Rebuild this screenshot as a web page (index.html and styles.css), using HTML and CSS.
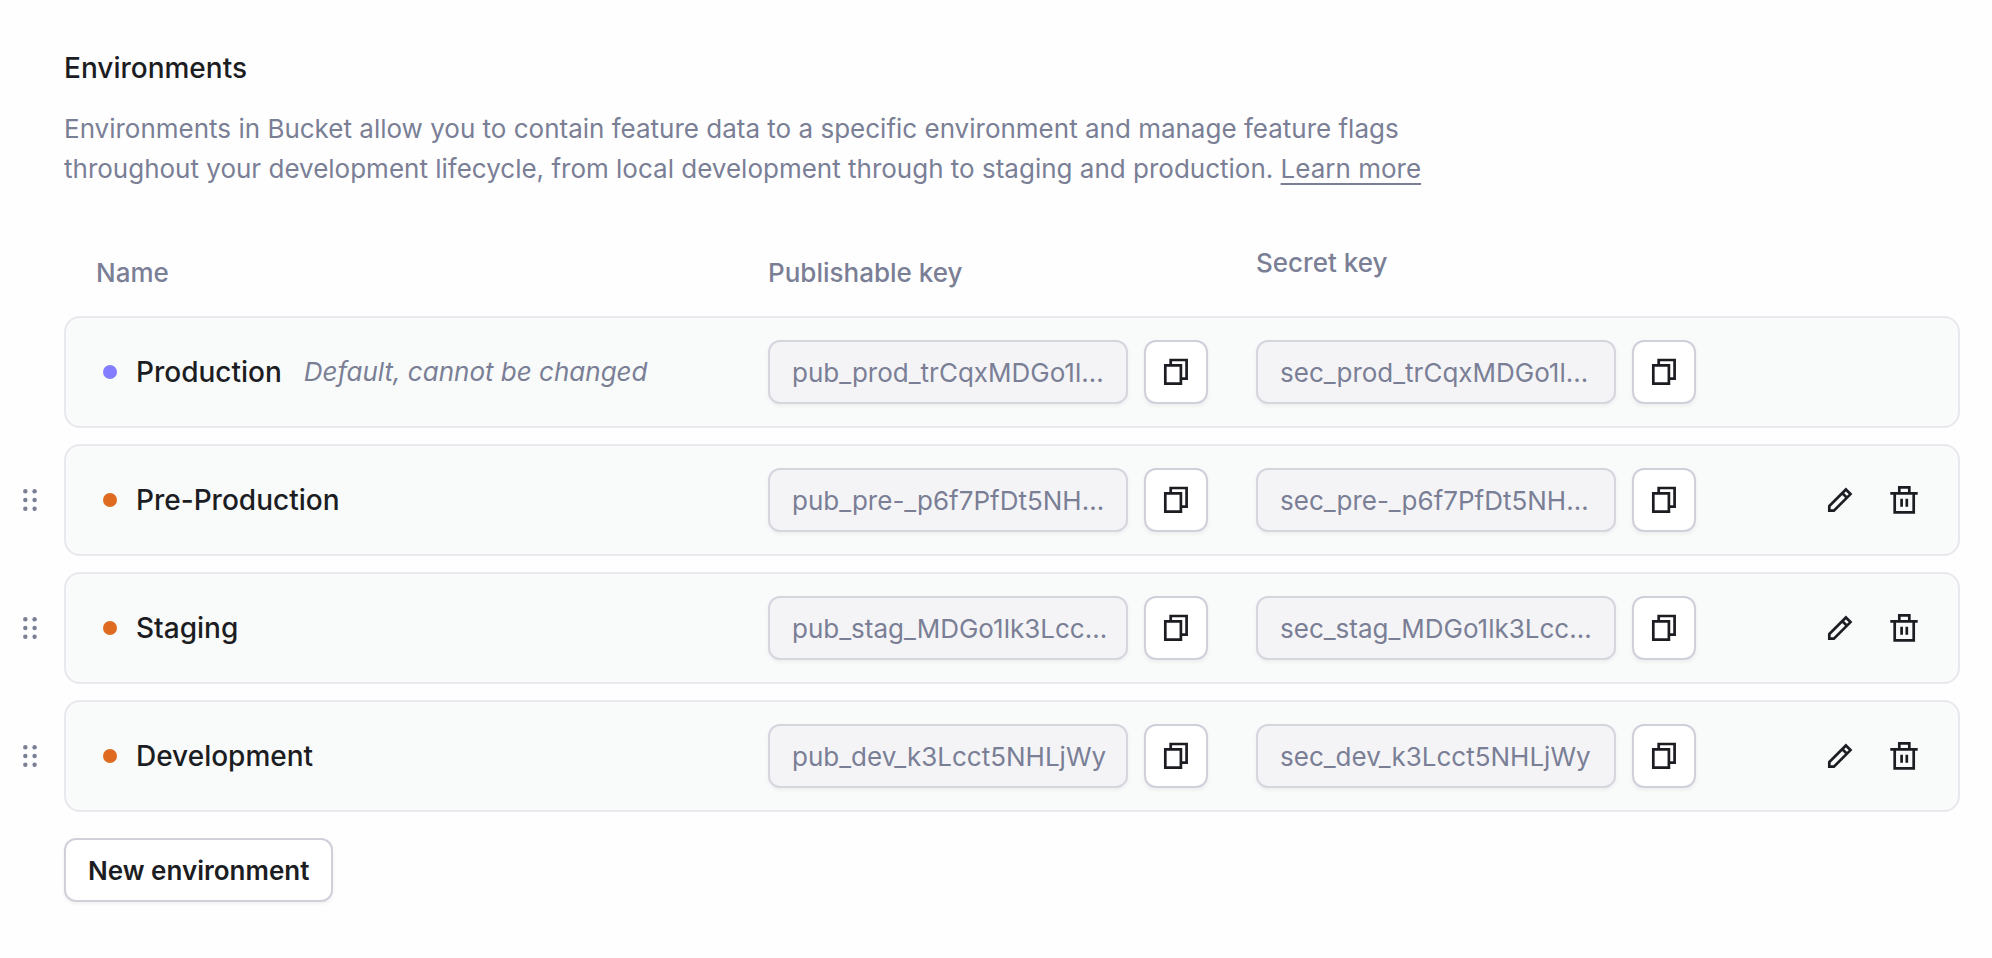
FILE: index.html
```html
<!DOCTYPE html>
<html lang="en">
<head>
<meta charset="utf-8">
<title>Environments</title>
<meta name="viewport" content="width=device-width, initial-scale=1">
<link rel="stylesheet" href="styles.css">
</head>
<body>
<svg class="sprite" aria-hidden="true">
  <symbol id="copy" viewBox="0 0 32 32"><path d="M5.3 9.4h15.6v18.3H5.3zM10.7 9.4V4h15.9v18.7H21"/></symbol>
  <symbol id="edit" viewBox="0 0 32 32"><path d="M5.3 26.7v-4.6L21.9 5.5l4.6 4.6L9.9 26.7zM18.3 9.1l4.6 4.6"/></symbol>
  <symbol id="trash" viewBox="0 0 32 32"><path d="M2.3 9.3h27.4M6.7 9.3v19h19V9.3M11.3 9.3V3.4h10v5.9M13.6 14.7v8M18.8 14.7v8"/></symbol>
  <symbol id="grip" viewBox="0 0 28 28"><circle cx="9.3" cy="5.3" r="2.2"/><circle cx="18.6" cy="5.3" r="2.2"/><circle cx="9.3" cy="14" r="2.2"/><circle cx="18.6" cy="14" r="2.2"/><circle cx="9.3" cy="22.7" r="2.2"/><circle cx="18.6" cy="22.7" r="2.2"/></symbol>
</svg>
<main class="page">
  <header class="intro">
    <h1 class="title">Environments</h1>
    <p class="description">Environments in Bucket allow you to contain feature data to a specific environment and manage feature flags throughout your development lifecycle, from local development through to staging and production. <a class="link" href="#">Learn more</a></p>
  </header>
  <table class="environments">
    <colgroup><col class="col-grip"><col><col class="col-key"><col class="col-key"><col class="col-actions"></colgroup>
    <thead>
      <tr>
        <td></td>
        <th class="head-name" scope="col">Name</th>
        <th scope="col">Publishable key</th>
        <th class="head-secret" scope="col">Secret key</th>
        <td></td>
      </tr>
    </thead>
    <tbody>
      <tr>
        <td class="grip-cell"></td>
        <td class="cell cell-first"><div class="name"><span class="dot dot-default"></span><span>Production</span><em class="note">Default, cannot be changed</em></div></td>
        <td class="cell"><div class="key"><input class="key-input" aria-label="Production publishable key" value="pub_prod_trCqxMDGo1l…" readonly><button class="copy" type="button" aria-label="Copy publishable key"><svg class="icon"><use href="#copy"/></svg></button></div></td>
        <td class="cell"><div class="key"><input class="key-input" aria-label="Production secret key" value="sec_prod_trCqxMDGo1l…" readonly><button class="copy" type="button" aria-label="Copy secret key"><svg class="icon"><use href="#copy"/></svg></button></div></td>
        <td class="cell cell-last"></td>
      </tr>
      <tr>
        <td class="grip-cell"><button class="grip" type="button" aria-label="Reorder Pre-Production"><svg class="grip-icon"><use href="#grip"/></svg></button></td>
        <td class="cell cell-first"><div class="name"><span class="dot"></span><span>Pre-Production</span></div></td>
        <td class="cell"><div class="key"><input class="key-input" aria-label="Pre-Production publishable key" value="pub_pre-_p6f7PfDt5NH…" readonly><button class="copy" type="button" aria-label="Copy publishable key"><svg class="icon"><use href="#copy"/></svg></button></div></td>
        <td class="cell"><div class="key"><input class="key-input" aria-label="Pre-Production secret key" value="sec_pre-_p6f7PfDt5NH…" readonly><button class="copy" type="button" aria-label="Copy secret key"><svg class="icon"><use href="#copy"/></svg></button></div></td>
        <td class="cell cell-last"><div class="actions"><button class="action" type="button" aria-label="Edit Pre-Production"><svg class="icon"><use href="#edit"/></svg></button><button class="action" type="button" aria-label="Delete Pre-Production"><svg class="icon"><use href="#trash"/></svg></button></div></td>
      </tr>
      <tr>
        <td class="grip-cell"><button class="grip" type="button" aria-label="Reorder Staging"><svg class="grip-icon"><use href="#grip"/></svg></button></td>
        <td class="cell cell-first"><div class="name"><span class="dot"></span><span>Staging</span></div></td>
        <td class="cell"><div class="key"><input class="key-input" aria-label="Staging publishable key" value="pub_stag_MDGo1lk3Lcc…" readonly><button class="copy" type="button" aria-label="Copy publishable key"><svg class="icon"><use href="#copy"/></svg></button></div></td>
        <td class="cell"><div class="key"><input class="key-input" aria-label="Staging secret key" value="sec_stag_MDGo1lk3Lcc…" readonly><button class="copy" type="button" aria-label="Copy secret key"><svg class="icon"><use href="#copy"/></svg></button></div></td>
        <td class="cell cell-last"><div class="actions"><button class="action" type="button" aria-label="Edit Staging"><svg class="icon"><use href="#edit"/></svg></button><button class="action" type="button" aria-label="Delete Staging"><svg class="icon"><use href="#trash"/></svg></button></div></td>
      </tr>
      <tr>
        <td class="grip-cell"><button class="grip" type="button" aria-label="Reorder Development"><svg class="grip-icon"><use href="#grip"/></svg></button></td>
        <td class="cell cell-first"><div class="name"><span class="dot"></span><span>Development</span></div></td>
        <td class="cell"><div class="key"><input class="key-input" aria-label="Development publishable key" value="pub_dev_k3Lcct5NHLjWy" readonly><button class="copy" type="button" aria-label="Copy publishable key"><svg class="icon"><use href="#copy"/></svg></button></div></td>
        <td class="cell"><div class="key"><input class="key-input" aria-label="Development secret key" value="sec_dev_k3Lcct5NHLjWy" readonly><button class="copy" type="button" aria-label="Copy secret key"><svg class="icon"><use href="#copy"/></svg></button></div></td>
        <td class="cell cell-last"><div class="actions"><button class="action" type="button" aria-label="Edit Development"><svg class="icon"><use href="#edit"/></svg></button><button class="action" type="button" aria-label="Delete Development"><svg class="icon"><use href="#trash"/></svg></button></div></td>
      </tr>
    </tbody>
  </table>
  <button class="new-button" type="button">New environment</button>
</main>
</body>
</html>
```
FILE: styles.css
```css
* { box-sizing: border-box; }

body {
  margin: 0;
  background: #fefefe;
  color: #1c1d22;
  font-family: Inter, sans-serif;
  font-size: 26px;
  line-height: 40px;
}

button, input { font: inherit; color: inherit; }

.sprite { position: absolute; width: 0; height: 0; }

.page { padding: 48px 32px 48px 0; }

.intro { padding-left: 64px; }

.title { margin: 0 0 21px; font-size: 28px; font-weight: 500; }

.description { max-width: 1400px; margin: 0; color: #7a7f96; }

.link {
  color: inherit;
  text-decoration: underline 2px;
  text-underline-offset: 5px;
  text-decoration-skip-ink: none;
}

.environments {
  width: 100%;
  margin-top: 40px;
  table-layout: fixed;
  border-collapse: separate;
  border-spacing: 0 16px;
}

.col-grip { width: 64px; }
.col-key { width: 488px; }
.col-actions { width: 216px; }

.environments td { padding: 0; }

.environments th {
  height: 55px;
  padding: 0;
  color: #7a7f96;
  font-weight: 500;
  line-height: 36px;
  text-align: left;
  vertical-align: middle;
}

.environments .head-name { padding-left: 32px; }
.environments .head-secret { vertical-align: top; }

.environments .cell {
  height: 112px;
  border: solid #e8e8ed;
  border-width: 2px 0;
  background: #f9fafa;
}

.environments .cell-first { padding-left: 30px; border-left-width: 2px; border-radius: 16px 0 0 16px; }
.environments .cell-last { padding-right: 22px; border-right-width: 2px; border-radius: 0 16px 16px 0; }

.name { display: flex; align-items: center; font-size: 28px; font-weight: 500; }

.dot {
  width: 14px;
  height: 14px;
  margin: 0 19px 0 7px;
  border-radius: 50%;
  background: #de6b1f;
}

.dot-default { background: #847dff; }

.note { margin-left: 22px; color: #7a7f96; font-size: 26px; font-weight: 400; }

.key { display: flex; gap: 16px; padding-right: 48px; }

.key-input {
  flex: 1;
  min-width: 0;
  height: 64px;
  padding: 0 14px 0 22px;
  border: 2px solid #d6d6de;
  border-radius: 12px;
  background: #f4f4f7;
  box-shadow: 0 2px 4px rgb(0 0 0 / 5%);
  color: #7a7f96;
  text-overflow: ellipsis;
}

.copy, .action, .grip { display: grid; place-items: center; padding: 0; border: 0; background: none; }

.copy {
  width: 64px;
  height: 64px;
  border: 2px solid #d0d0da;
  border-radius: 12px;
  background: #fff;
  box-shadow: 0 2px 4px rgb(0 0 0 / 6%);
}

.icon { width: 32px; height: 32px; fill: none; stroke: #1c1d22; stroke-width: 2.7; }

.actions { display: flex; justify-content: flex-end; }

.action { width: 64px; height: 64px; }

.grip { width: 60px; height: 64px; }

.grip-icon { width: 28px; height: 28px; fill: #7a7f96; }

.new-button {
  height: 64px;
  margin: 10px 0 0 64px;
  padding: 2px 22px 0;
  border: 2px solid #d0d0da;
  border-radius: 12px;
  background: #fff;
  box-shadow: 0 2px 4px rgb(0 0 0 / 6%);
  font-weight: 600;
}
```
